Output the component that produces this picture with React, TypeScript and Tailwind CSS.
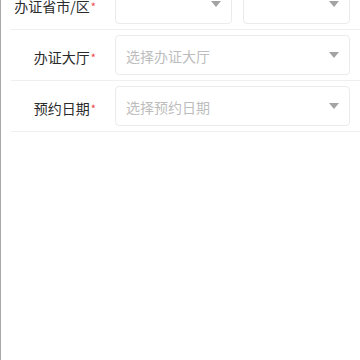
import React from "react";

const Arrow = () => (
  <svg width="10" height="6" viewBox="0 0 10 6" className="shrink-0">
    <polygon points="0,0 10,0 5,6" fill="#a3a3a3" />
  </svg>
);

const Select = ({ placeholder, className = "" }: { placeholder?: string; className?: string }) => (
  <div
    className={`h-[40px] flex items-center justify-between pl-[10px] pr-[10px] border border-[#ebebeb] rounded-[4px] bg-white ${className}`}
  >
    <span className="text-[14px] text-[#bdbdbd] whitespace-nowrap pt-[2px]">{placeholder}</span>
    <Arrow />
  </div>
);

const Label = ({ text }: { text: string }) => (
  <div className="w-[104px] shrink-0 pr-[19px] flex justify-end items-center pt-[4px]">
    <span className="text-[14px] text-[#2a2a2a] whitespace-nowrap">{text}</span>
    <span className="text-[11px] text-[#ee4444] leading-none ml-[1px]">*</span>
  </div>
);

export default function App() {
  return (
    <div
      className="h-[360px] w-[360px] overflow-hidden bg-white border-l border-[#a8a8a8]"
      style={{ fontFamily: '"Noto Sans CJK SC", "Noto Sans", sans-serif' }}
    >
      <div className="-mt-[21px]">
        <div className="ml-[10px] pr-[10px] py-[5px] flex items-center border-b border-[#efefef]">
          <Label text="办证省市/区" />
          <div className="flex-1 flex gap-[11px]">
            <Select className="w-[117px]" />
            <Select className="flex-1" />
          </div>
        </div>
        <div className="ml-[10px] pr-[10px] py-[5px] flex items-center border-b border-[#efefef]">
          <Label text="办证大厅" />
          <Select className="flex-1" placeholder="选择办证大厅" />
        </div>
        <div className="ml-[10px] pr-[10px] py-[5px] flex items-center border-b border-[#efefef]">
          <Label text="预约日期" />
          <Select className="flex-1" placeholder="选择预约日期" />
        </div>
      </div>
    </div>
  );
}
